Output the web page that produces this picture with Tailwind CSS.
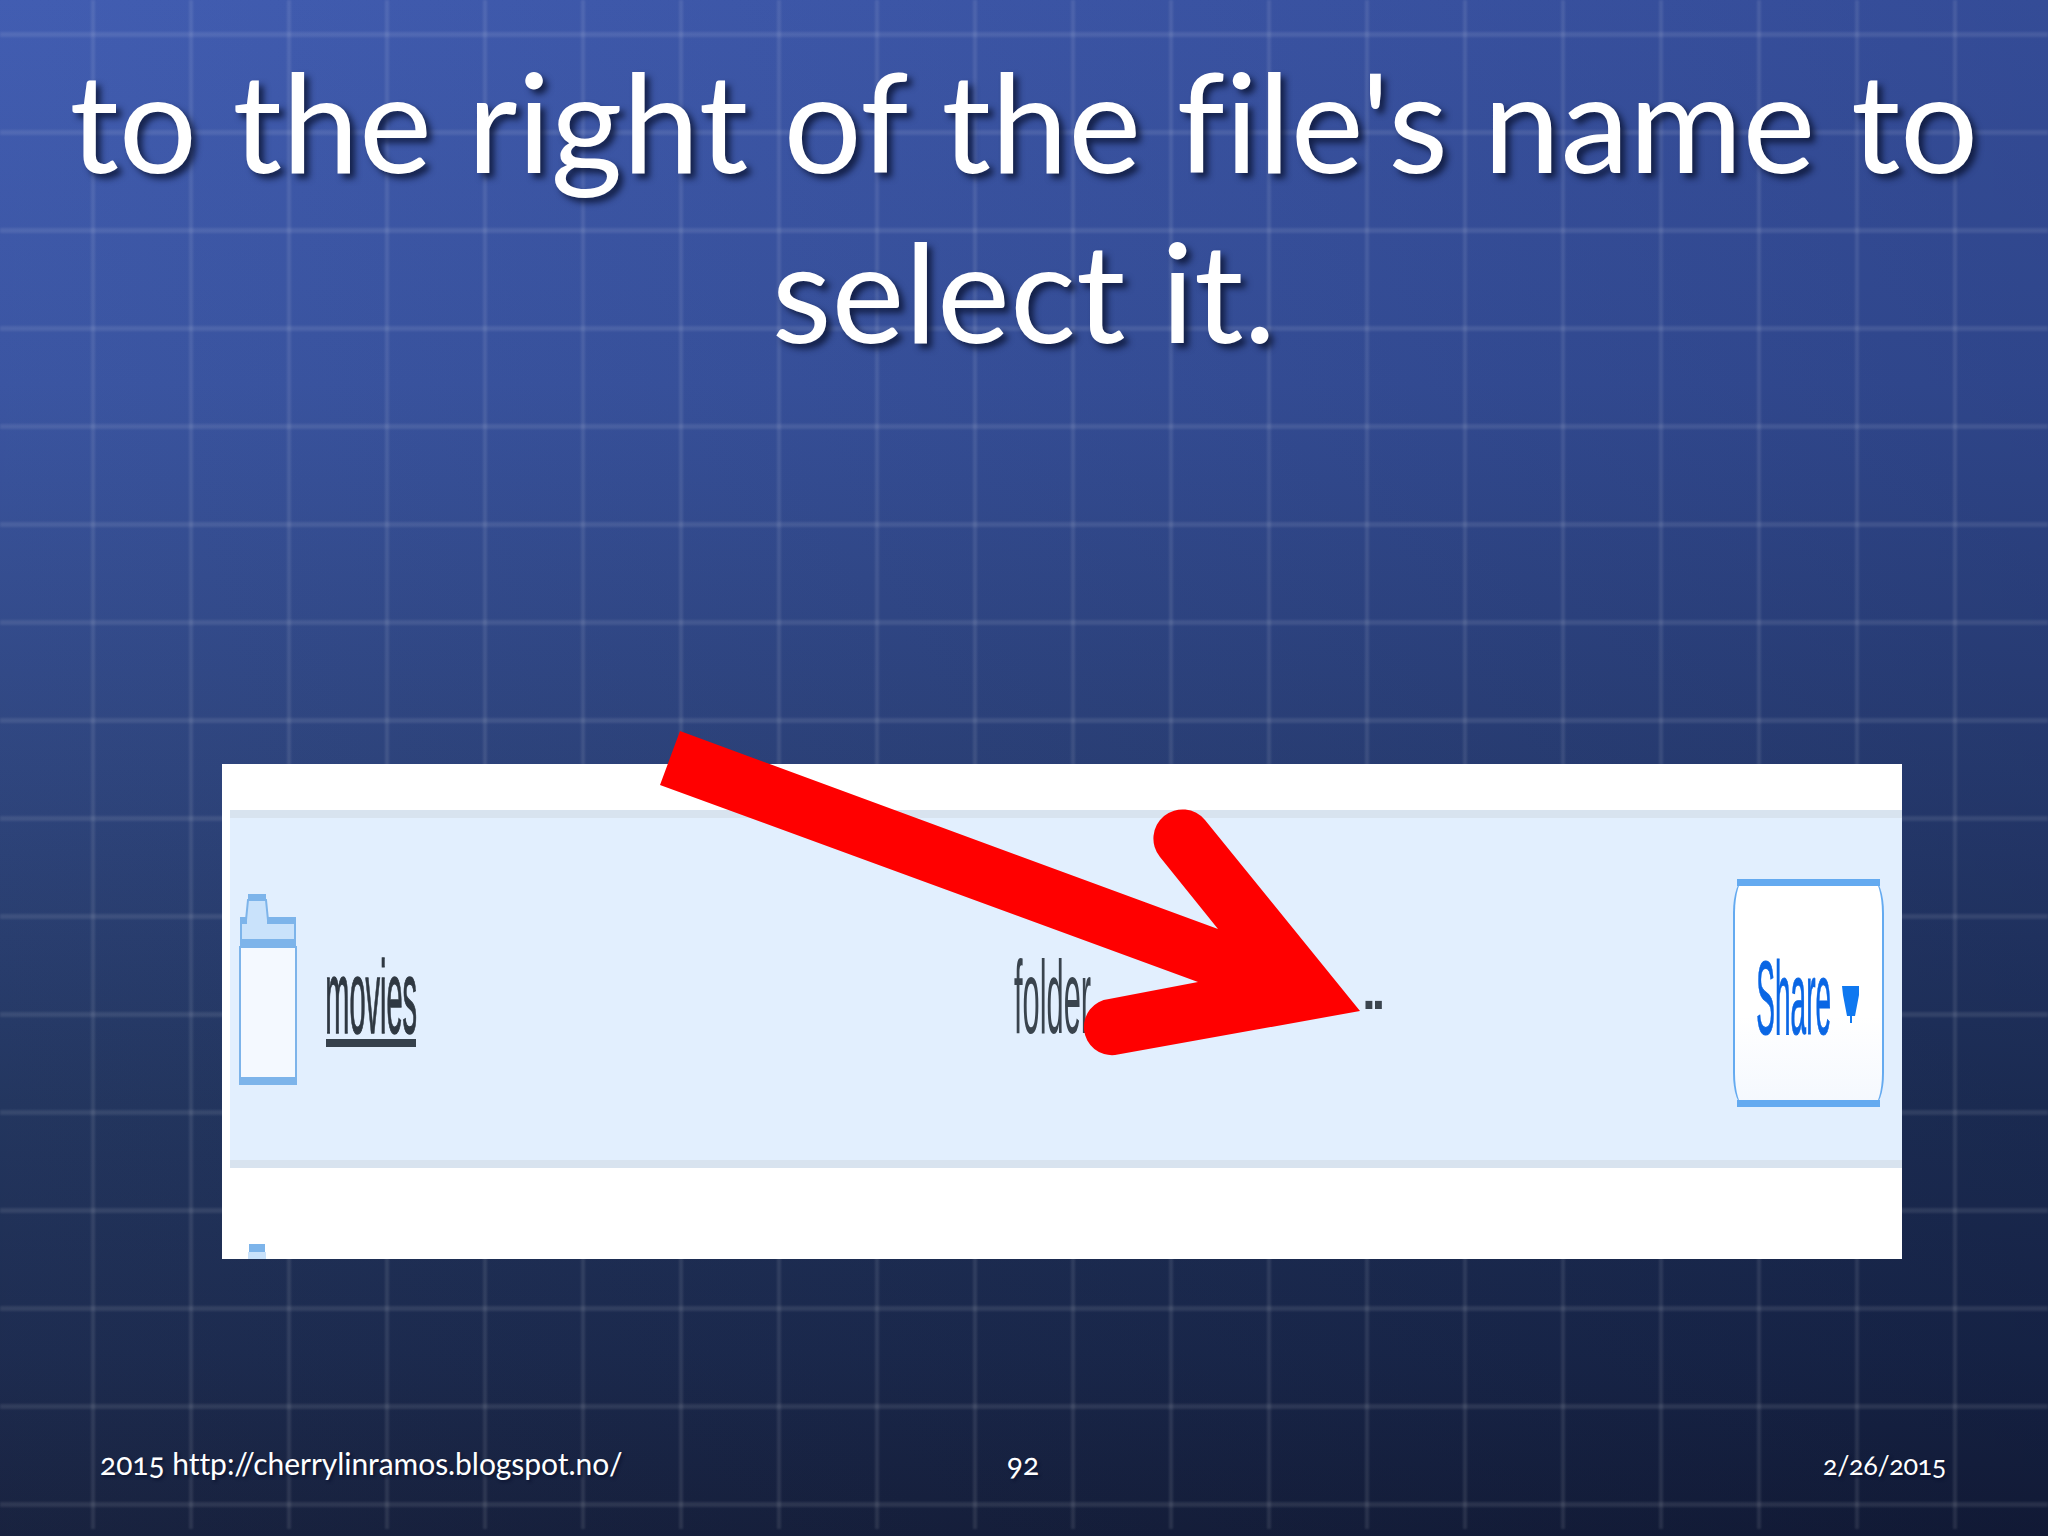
<!DOCTYPE html>
<html lang="en">
<head>
    <meta charset="UTF-8">
    <title>Slide 92</title>
    <script src="https://cdn.jsdelivr.net/npm/@tailwindcss/browser@4"></script>
</head>
<body class="relative w-[2048px] h-[1536px] overflow-hidden font-['Lato',sans-serif] bg-[linear-gradient(to_right,rgba(255,255,255,0.02),rgba(0,0,20,0.16)),linear-gradient(to_bottom,#3e5ab0_0%,#3752a0_25%,#2b427c_50%,#1f325c_72%,#19284d_88%,#141e3b_100%)]">

    <!-- background grid -->
    <svg class="absolute top-0 left-0 blur-[1px]" width="2048" height="1536" viewBox="0 0 2048 1536">
        <defs>
            <pattern id="cols" x="91" y="0" width="98" height="1529" patternUnits="userSpaceOnUse">
                <rect x="0" y="0" width="4" height="1529" fill="#fff" fill-opacity="0.095"></rect>
            </pattern>
            <pattern id="rows" x="0" y="32" width="2048" height="98" patternUnits="userSpaceOnUse">
                <rect x="0" y="0" width="2048" height="5" fill="#fff" fill-opacity="0.095"></rect>
            </pattern>
        </defs>
        <rect x="0" y="0" width="2048" height="1529" fill="url(#cols)"></rect>
        <rect x="0" y="0" width="2048" height="1536" fill="url(#rows)"></rect>
    </svg>

    <main class="relative flex flex-col h-full">
        <!-- Title -->
        <h1 class="pt-[35px] text-center text-white font-normal text-[138px] leading-[170px] tracking-[0.05px] [text-shadow:5px_5px_6px_rgba(8,16,44,0.75)]">
            to the right of the file's name to<br>select it.
        </h1>

        <!-- Screenshot panel -->
        <div class="ml-[222px] mt-[389px] w-[1680px] h-[495px] bg-white pl-[8px] overflow-hidden font-['Liberation_Sans',sans-serif]">
            <div class="mt-[46px] h-[358px] flex items-start bg-[#e2effe] border-y-8 border-[#d8e3ef]">
                <!-- folder icon -->
                <svg class="ml-[9px] mt-[76px] shrink-0" width="58" height="191" viewBox="0 0 58 191">
                    <path d="M9 6h18l2 20h27v20H2V26h5z" fill="#c9e2fb" stroke="#7db4ea" stroke-width="2"></path>
                    <rect x="9" y="0" width="18" height="7" fill="#7db4ea"></rect>
                    <rect x="1" y="23" width="7" height="7" fill="#7db4ea"></rect>
                    <rect x="28" y="23" width="29" height="7" fill="#7db4ea"></rect>
                    <rect x="1" y="45" width="56" height="8" fill="#7db4ea"></rect>
                    <rect x="1" y="53" width="56" height="131" fill="#f4f9ff" stroke="#7db4ea" stroke-width="2"></rect>
                    <rect x="0" y="183" width="58" height="8" fill="#7db4ea"></rect>
                </svg>

                <div class="ml-[29px] mt-[137px] w-[90px] h-[92px] shrink-0 flex items-end justify-center border-b-8 border-[#36414c] text-[#2f3842]">
                    <span class="block text-[14px] leading-[14px] origin-bottom scale-x-[2.07] scale-y-[7.4] -mb-[9px] [-webkit-text-stroke:0.2px_currentColor]">movies</span>
                </div>

                <div class="ml-[599px] mt-[137px] w-[76px] h-[92px] shrink-0 flex items-end justify-center pb-[8px] text-[#3a444e]">
                    <span class="block text-[14px] leading-[14px] origin-bottom scale-x-[2.2] scale-y-[7.4] -mb-[9px]">folder</span>
                </div>

                <div class="ml-[274px] mt-[137px] w-[17px] h-[92px] shrink-0 flex items-end justify-center pb-[8px] text-[#3a444e]">
                    <span class="block text-[14px] leading-[14px] origin-bottom scale-x-[2] scale-y-[7.4] -mb-[9px]">--</span>
                </div>

                <!-- Share button -->
                <div class="ml-[351px] mt-[61px] w-[151px] h-[228px] shrink-0 flex flex-col rounded-[12px/34px] border-x-2 border-[#64aaf0] bg-linear-to-b from-white from-60% to-[#f4f8fe]">
                    <div class="h-[7px] mx-[2px] bg-[#64aaf0]"></div>
                    <div class="flex-1 flex items-start pl-[21px] text-[#0a66e4]">
                        <div class="mt-[70px] w-[75px] h-[84px] flex items-end justify-center">
                            <span class="block text-[14px] leading-[14px] origin-bottom scale-x-[2] scale-y-[7.4] -mb-[9px] [-webkit-text-stroke:0.15px_currentColor]">Share</span>
                        </div>
                        <svg class="ml-[11px] mt-[100px]" width="18" height="37" viewBox="0 0 18 37">
                            <path d="M0 0H17V9L13 30H10V37H8V30H5L1 9Z" fill="#0f78f0"></path>
                        </svg>
                    </div>
                    <div class="h-[7px] mx-[2px] bg-[#64aaf0]"></div>
                </div>
            </div>

            <!-- top of the next folder icon -->
            <svg class="ml-[17px] mt-[76px]" width="20" height="15" viewBox="0 0 20 15">
                <rect x="2" y="0" width="16" height="8" fill="#7db4ea"></rect>
                <rect x="1" y="8" width="18" height="7" fill="#c9e2fb"></rect>
            </svg>
        </div>

        <!-- Footer -->
        <footer class="mt-auto mb-[53px] pl-[100px] pr-[102px] grid grid-cols-3 items-baseline text-white text-[30px] leading-[36px] tracking-[-0.05px] oldstyle-nums [text-shadow:2px_2px_3px_rgba(8,16,44,0.7)]">
            <span class="whitespace-nowrap">2015 http://cherrylinramos.blogspot.no/</span>
            <span class="text-center">92</span>
            <span class="text-right text-[27px] tracking-[-0.4px]">2/26/2015</span>
        </footer>
    </main>

    <!-- red arrow over the panel -->
    <svg class="absolute top-0 left-0" width="2048" height="1536" viewBox="0 0 2048 1536">
        <path d="M680 731L1218 929L1160 857A29 29 0 0 1 1205 820L1360 1011L1115 1055A28 28 0 0 1 1109 999L1198 982L660 785Z" fill="#ff0000"></path>
    </svg>
</body>
</html>
